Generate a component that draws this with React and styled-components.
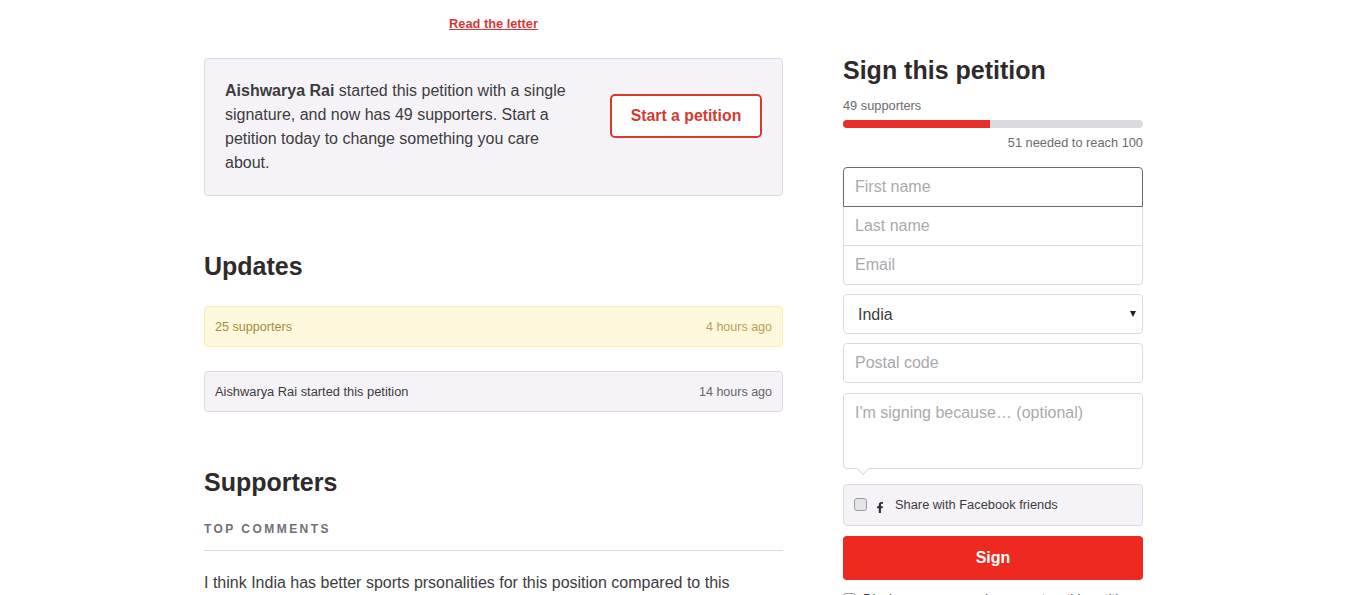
import React from 'react';
import styled, { createGlobalStyle } from 'styled-components';
import { FaFacebookF } from 'react-icons/fa';

const GlobalStyle = createGlobalStyle`
    html, body {
        margin: 0;
        height: 595px;
        overflow: hidden;
        background: #fff;
    }

    body {
        font-family: "Liberation Sans", Arial, sans-serif;
        color: #3d3c40;
    }

    * {
        box-sizing: border-box;
    }
`;

const Page = styled.div`
    display: flex;
    align-items: flex-start;
    gap: 60px;
    width: 1143px;
    padding-left: 204px;
`;

const LeftColumn = styled.div`
    width: 579px;
    padding-top: 15px;
`;

const RightColumn = styled.div`
    width: 300px;
    padding-top: 54px;
`;

const LetterLink = styled.a`
    display: block;
    text-align: center;
    font-size: 12.8px;
    line-height: 17px;
    font-weight: 700;
    color: #d6383a;
    text-decoration: underline;
`;

const InfoCard = styled.div`
    display: flex;
    align-items: center;
    justify-content: space-between;
    height: 138px;
    margin-top: 26px;
    padding: 0 20px;
    background: #f5f3f7;
    border: 1px solid #dcdadf;
    border-radius: 4px;
`;

const InfoText = styled.p`
    width: 350px;
    margin: 0;
    font-size: 16px;
    line-height: 24px;
`;

const StartButton = styled.button`
    width: 152px;
    height: 44px;
    margin-bottom: 22px;
    padding: 0;
    background: #fff;
    border: 2px solid #d63a2f;
    border-radius: 5px;
    font-family: inherit;
    font-size: 15.8px;
    font-weight: 700;
    color: #d63a2f;
`;

const SectionTitle = styled.h2`
    margin: ${props => props.$top}px 0 0;
    font-size: 25px;
    line-height: 32px;
    font-weight: 700;
    color: #2f2b2b;
`;

const UpdateRow = styled.div`
    display: flex;
    align-items: center;
    justify-content: space-between;
    height: 41px;
    margin-top: ${props => props.$top}px;
    padding: 0 10px;
    font-size: 12.5px;
    border-radius: 4px;
    border: 1px solid ${props => props.$highlight ? '#f8eeb0' : '#dcdadf'};
    background: ${props => props.$highlight ? '#fef9dd' : '#f5f3f7'};
    color: ${props => props.$highlight ? '#a68a3c' : '#3d3c40'};
`;

const UpdateLabel = styled.span`
    font-size: ${props => props.$highlight ? 12.6 : 12.85}px;
`;

const UpdateTime = styled.span`
    color: ${props => props.$highlight ? '#b89f58' : '#66656a'};
`;

const CommentsLabel = styled.div`
    margin-top: 23px;
    padding-bottom: 13px;
    border-bottom: 1px solid #dcdadf;
    font-size: 12px;
    line-height: 16px;
    font-weight: 700;
    letter-spacing: 2.45px;
    color: #717074;
`;

const CommentText = styled.p`
    margin: 20px 0 0;
    font-size: 16px;
    line-height: 24px;
`;

const SignTitle = styled.h2`
    margin: 0;
    font-size: 25px;
    line-height: 32px;
    font-weight: 700;
    color: #2f2b2b;
`;

const Count = styled.div`
    margin-top: 12px;
    font-size: 12.8px;
    line-height: 16px;
    color: #6b6a6e;
`;

const ProgressTrack = styled.div`
    height: 8px;
    margin-top: 6px;
    background: #dcdadf;
    border-radius: 4px;
    overflow: hidden;
`;

const ProgressFill = styled.div`
    height: 100%;
    background: #e8302a;
`;

const Needed = styled(Count)`
    margin-top: 7px;
    text-align: right;
`;

const FieldStack = styled.div`
    display: flex;
    flex-direction: column;
    margin-top: 16px;
`;

const StackInput = styled.input`
    width: 100%;
    height: ${props => props.$first ? 40 : 39}px;
    padding: 0 11px;
    background: #fff;
    border: 1px solid ${props => props.$first ? '#6a696d' : '#dcdadf'};
    border-top-width: ${props => props.$first ? 1 : 0}px;
    border-radius: ${props => props.$first ? '4px 4px 0 0' : props.$last ? '0 0 4px 4px' : '0'};
    font-family: inherit;
    font-size: 16px;
    outline: none;

    &::placeholder {
        color: #aaa9ad;
        opacity: 1;
    }
`;

const TextInput = styled(StackInput)`
    display: block;
    height: 40px;
    margin-top: 9px;
    border: 1px solid #dcdadf;
    border-radius: 4px;
`;

const SelectWrap = styled.div`
    position: relative;
    margin-top: 9px;

    &::after {
        content: '';
        position: absolute;
        top: 17px;
        right: 7px;
        border-left: 3px solid transparent;
        border-right: 3px solid transparent;
        border-top: 6px solid #222;
    }
`;

const CountrySelect = styled.select`
    display: block;
    width: 100%;
    height: 40px;
    padding: 0 14px;
    appearance: none;
    background: #fff;
    border: 1px solid #dcdadf;
    border-radius: 4px;
    font-family: inherit;
    font-size: 16px;
    color: #3d3c40;
`;

const ReasonWrap = styled.div`
    position: relative;
    margin-top: 10px;

    &::after {
        content: '';
        position: absolute;
        left: 15px;
        bottom: -4px;
        width: 9px;
        height: 9px;
        background: #fff;
        border-right: 1px solid #dcdadf;
        border-bottom: 1px solid #dcdadf;
        transform: rotate(45deg);
    }
`;

const ReasonInput = styled.textarea`
    display: block;
    width: 100%;
    height: 76px;
    padding: 9px 11px;
    resize: none;
    background: #fff;
    border: 1px solid #dcdadf;
    border-radius: 4px;
    font-family: inherit;
    font-size: 16px;
    line-height: 19px;
    outline: none;

    &::placeholder {
        color: #aaa9ad;
        opacity: 1;
    }
`;

const ShareBox = styled.label`
    display: flex;
    align-items: center;
    height: 42px;
    margin-top: 15px;
    padding: 0 10px 2px;
    background: #f5f3f7;
    border: 1px solid #dcdadf;
    border-radius: 4px;
    font-size: 12.85px;
`;

const CheckBox = styled.input.attrs({ type: 'checkbox' })`
    flex: none;
    width: 13px;
    height: 13px;
    margin: 0;
    appearance: none;
    background: ${props => props.$plain ? '#fff' : '#e4e3e7'};
    border: 1px solid #9c9ba0;
    border-radius: 3px;
`;

const FacebookGlyph = styled(FaFacebookF)`
    flex: none;
    width: 10px;
    height: 11px;
    margin: 6px 10px 0 8px;
    color: #2b2b33;
`;

const SignButton = styled.button`
    display: block;
    width: 100%;
    height: 44px;
    margin-top: 10px;
    padding: 0;
    background: #ee2a20;
    border: 0;
    border-radius: 4px;
    font-family: inherit;
    font-size: 16px;
    font-weight: 700;
    color: #fff;
`;

const DisplayRow = styled.label`
    display: flex;
    align-items: center;
    gap: 7px;
    margin-top: 11px;
    font-size: 13px;
    line-height: 16px;
`;

export default function App() {
    const supporters = 49;
    const goal = 100;

    return (
        <Page>
            <GlobalStyle />
            <LeftColumn>
                <LetterLink href="#">Read the letter</LetterLink>
                <InfoCard>
                    <InfoText>
                        <strong>Aishwarya Rai</strong> started this petition with a single signature, and now has 49 supporters. Start a petition today to change something you care about.
                    </InfoText>
                    <StartButton>Start a petition</StartButton>
                </InfoCard>

                <SectionTitle $top={54}>Updates</SectionTitle>
                <UpdateRow $top={24} $highlight>
                    <UpdateLabel $highlight>25 supporters</UpdateLabel>
                    <UpdateTime $highlight>4 hours ago</UpdateTime>
                </UpdateRow>
                <UpdateRow $top={24}>
                    <UpdateLabel>Aishwarya Rai started this petition</UpdateLabel>
                    <UpdateTime>14 hours ago</UpdateTime>
                </UpdateRow>

                <SectionTitle $top={54}>Supporters</SectionTitle>
                <CommentsLabel>TOP COMMENTS</CommentsLabel>
                <CommentText>I think India has better sports prsonalities for this position compared to this</CommentText>
            </LeftColumn>

            <RightColumn>
                <SignTitle>Sign this petition</SignTitle>
                <Count>{supporters} supporters</Count>
                <ProgressTrack>
                    <ProgressFill style={{ width: `${(supporters / goal) * 100}%` }} />
                </ProgressTrack>
                <Needed>{goal - supporters} needed to reach {goal}</Needed>

                <FieldStack>
                    <StackInput $first placeholder="First name" />
                    <StackInput placeholder="Last name" />
                    <StackInput $last placeholder="Email" />
                </FieldStack>
                <SelectWrap>
                    <CountrySelect defaultValue="India">
                        <option>India</option>
                    </CountrySelect>
                </SelectWrap>
                <TextInput placeholder="Postal code" />
                <ReasonWrap>
                    <ReasonInput placeholder="I'm signing because… (optional)" />
                </ReasonWrap>
                <ShareBox>
                    <CheckBox />
                    <FacebookGlyph />
                    Share with Facebook friends
                </ShareBox>
                <SignButton>Sign</SignButton>
                <DisplayRow>
                    <CheckBox $plain />
                    Display my name and comment on this petition
                </DisplayRow>
            </RightColumn>
        </Page>
    );
}
